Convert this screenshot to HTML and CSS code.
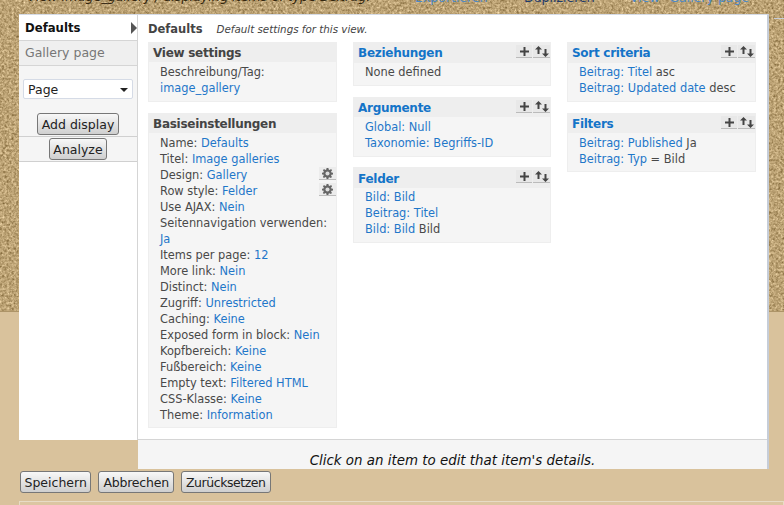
FILE: index.html
```html
<!DOCTYPE html>
<html lang="de">
<head>
<meta charset="utf-8">
<title>Defaults</title>
<link rel="stylesheet" href="styles.css">
</head>
<body>
<svg class="texture" width="784" height="312" aria-hidden="true">
  <filter id="grain" x="0" y="0" width="100%" height="100%" color-interpolation-filters="sRGB">
    <feTurbulence type="fractalNoise" baseFrequency="0.42" numOctaves="4" seed="7"/>
    <feColorMatrix type="matrix" values="0.45 0.3 0 0 0.36  0.45 0.3 0 0 0.26  0.45 0.3 0 0 0.08  0 0 0 0 1"/>
  </filter>
  <rect width="784" height="312" filter="url(#grain)"/>
</svg>
<div class="page">
  <div class="topbar">
    <div class="crumb">View image_gallery / displaying items of type Beitrag:</div>
    <div class="actions"><a class="act-export">Exportieren</a><span class="act-dup">Duplizieren</span><a class="act-view">View "Gallery page"</a></div>
  </div>
  <div class="corner-line"></div>
  <div class="editor">
    <div class="sidebar">
      <div class="tab tab-active">Defaults<span class="arrow"></span></div>
      <div class="tab tab-other">Gallery page</div>
      <div class="add-box">
        <div class="select">Page<span class="caret"></span></div>
        <button class="btn btn-add">Add display</button>
      </div>
      <div class="analyze"><button class="btn btn-analyze">Analyze</button></div>
    </div>
    <div class="main">
      <div class="content">
        <div class="title-row"><strong>Defaults</strong><em>Default settings for this view.</em></div>
        <div class="columns">
          <div class="col col-1">
            <section class="box box-tall">
              <h3>View settings</h3>
              <div class="rows">
                <div>Beschreibung/Tag:</div>
                <div><a>image_gallery</a></div>
              </div>
            </section>
            <section class="box">
              <h3>Basiseinstellungen</h3>
              <div class="rows">
                <div>Name: <a>Defaults</a></div>
                <div>Titel: <a>Image galleries</a></div>
                <div>Design: <a>Gallery</a><span class="icon-btn gear"><svg width="11" height="11" viewBox="0 0 12 12"><path fill="#666" d="M5 0h2l.3 1.7 1.1.5L9.900 1.200 11 2.500 9.900 3.900l.4 1.100L12 5.200v1.800l-1.700.3-.4 1 1 1.500-1.300 1.200-1.400-1-1.100.5L7 12H5l-.3-1.600-1.100-.5-1.400 1L.9 9.700l1-1.500-.4-1L0 7V5.200l1.600-.2.400-1.100-1-1.400L2.200 1.200l1.400 1 1.100-.5z"/><circle cx="6" cy="6" r="2.200" fill="#ddd"/></svg></span></div>
                <div>Row style: <a>Felder</a><span class="icon-btn gear"><svg width="11" height="11" viewBox="0 0 12 12"><path fill="#666" d="M5 0h2l.3 1.700 1.100.5L9.900 1.200 11 2.500 9.900 3.900l.4 1.100L12 5.200v1.800l-1.700.3-.4 1 1 1.500-1.300 1.200-1.400-1-1.100.5L7 12H5l-.3-1.600-1.100-.5-1.400 1L.9 9.700l1-1.500-.4-1L0 7V5.200l1.600-.2.400-1.100-1-1.400L2.200 1.200l1.400 1 1.100-.5z"/><circle cx="6" cy="6" r="2.200" fill="#ddd"/></svg></span></div>
                <div>Use AJAX: <a>Nein</a></div>
                <div>Seitennavigation verwenden:</div>
                <div><a>Ja</a></div>
                <div>Items per page: <a>12</a></div>
                <div>More link: <a>Nein</a></div>
                <div>Distinct: <a>Nein</a></div>
                <div>Zugriff: <a>Unrestricted</a></div>
                <div>Caching: <a>Keine</a></div>
                <div>Exposed form in block: <a>Nein</a></div>
                <div>Kopfbereich: <a>Keine</a></div>
                <div>Fußbereich: <a>Keine</a></div>
                <div>Empty text: <a>Filtered HTML</a></div>
                <div>CSS-Klasse: <a>Keine</a></div>
                <div>Theme: <a>Information</a></div>
              </div>
            </section>
          </div>
          <div class="col col-2">
            <section class="box box-single">
              <h3 class="head-link head-tall">Beziehungen<span class="tools"><span class="icon-btn"><svg width="9" height="9" viewBox="0 0 9 9"><path fill="#444" d="M3.500 0h2v3.500H9v2H5.500V9h-2V5.500H0v-2h3.500z"/></svg></span><span class="icon-btn"><svg width="14" height="11" viewBox="0 0 14 11"><path fill="#444" d="M3.500 0L7 3.500H4.500V8h-2V3.500H0zM10.500 11L7 7.500h2.500V3h2v4.500H14z"/></svg></span></span></h3>
              <div class="rows"><div>None defined</div></div>
            </section>
            <section class="box box-args">
              <h3 class="head-link">Argumente<span class="tools"><span class="icon-btn"><svg width="9" height="9" viewBox="0 0 9 9"><path fill="#444" d="M3.500 0h2v3.500H9v2H5.500V9h-2V5.500H0v-2h3.500z"/></svg></span><span class="icon-btn"><svg width="14" height="11" viewBox="0 0 14 11"><path fill="#444" d="M3.500 0L7 3.500H4.500V8h-2V3.500H0zM10.500 11L7 7.500h2.500V3h2v4.500H14z"/></svg></span></span></h3>
              <div class="rows">
                <div><a>Global: Null</a></div>
                <div><a>Taxonomie: Begriffs-ID</a></div>
              </div>
            </section>
            <section class="box box-fields">
              <h3 class="head-link head-tall">Felder<span class="tools"><span class="icon-btn"><svg width="9" height="9" viewBox="0 0 9 9"><path fill="#444" d="M3.500 0h2v3.500H9v2H5.500V9h-2V5.500H0v-2h3.500z"/></svg></span><span class="icon-btn"><svg width="14" height="11" viewBox="0 0 14 11"><path fill="#444" d="M3.500 0L7 3.500H4.500V8h-2V3.500H0zM10.500 11L7 7.500h2.500V3h2v4.500H14z"/></svg></span></span></h3>
              <div class="rows">
                <div><a>Bild: Bild</a></div>
                <div><a>Beitrag: Titel</a></div>
                <div><a>Bild: Bild</a> Bild</div>
              </div>
            </section>
          </div>
          <div class="col col-3">
            <section class="box box-tall">
              <h3 class="head-link head-tall">Sort criteria<span class="tools"><span class="icon-btn"><svg width="9" height="9" viewBox="0 0 9 9"><path fill="#444" d="M3.500 0h2v3.500H9v2H5.500V9h-2V5.500H0v-2h3.500z"/></svg></span><span class="icon-btn"><svg width="14" height="11" viewBox="0 0 14 11"><path fill="#444" d="M3.500 0L7 3.500H4.500V8h-2V3.500H0zM10.500 11L7 7.500h2.500V3h2v4.500H14z"/></svg></span></span></h3>
              <div class="rows">
                <div><a>Beitrag: Titel</a> asc</div>
                <div><a>Beitrag: Updated date</a> desc</div>
              </div>
            </section>
            <section class="box">
              <h3 class="head-link">Filters<span class="tools"><span class="icon-btn"><svg width="9" height="9" viewBox="0 0 9 9"><path fill="#444" d="M3.500 0h2v3.500H9v2H5.500V9h-2V5.500H0v-2h3.500z"/></svg></span><span class="icon-btn"><svg width="14" height="11" viewBox="0 0 14 11"><path fill="#444" d="M3.500 0L7 3.500H4.500V8h-2V3.500H0zM10.500 11L7 7.500h2.500V3h2v4.500H14z"/></svg></span></span></h3>
              <div class="rows">
                <div><a>Beitrag: Published</a> Ja</div>
                <div><a>Beitrag: Typ</a> = Bild</div>
              </div>
            </section>
          </div>
        </div>
      </div>
      <div class="details"><em>Click on an item to edit that item's details.</em></div>
    </div>
  </div>
  <div class="buttons">
    <button class="btn btn-save">Speichern</button><button class="btn btn-cancel">Abbrechen</button><button class="btn btn-tight">Zurücksetzen</button>
  </div>
  <div class="lower-box"></div>
</div>
</body>
</html>
```

FILE: styles.css
```css
* { box-sizing: border-box; }
html, body { margin: 0; padding: 0; }
body {
  background: #d9c29c;
  font-family: "DejaVu Sans", Verdana, sans-serif;
  font-size: 11.4px;
  line-height: 16px;
  color: #494949;
  width: 784px;
  height: 505px;
  overflow: hidden;
  position: relative;
}
a { color: #1f77c9; }
.texture { position: absolute; left: 0; top: 0; border-bottom: 1px solid #ad9468; }
.page { position: relative; }

.topbar { height: 14px; overflow: hidden; position: relative; }
.crumb { position: absolute; top: -11px; left: 27px; width: 356px; font-size: 13px; font-style: italic; color: #33260f; white-space: nowrap; overflow: hidden; letter-spacing: -0.15px; }
.actions { position: absolute; top: -10px; left: 0; width: 784px; height: 20px; font-size: 12.5px; display: flex; white-space: nowrap; }
.actions a { color: #4a88c8; }
.act-export { margin-left: 415px; width: 109px; }
.act-dup { color: #1d3a6b; width: 106px; }
.corner-line { position: absolute; left: 774px; top: 18px; width: 10px; height: 1px; background: #c6cdd8; }

.editor { display: flex; margin-left: 19px; width: 750px; align-items: flex-start; border-top: 1px solid #d5dbe6; border-right: 2px solid #c6cdd8; }
.sidebar { width: 119px; height: 425px; flex: none; background: #fff; border-right: 1px solid #d5d5d5; }
.tab { padding-left: 6px; }
.tab-active { position: relative; background: #fff; color: #111; font-weight: bold; font-size: 11.7px; border-bottom: 1px solid #d5d5d5; height: 26px; padding-top: 5px; }
.arrow { position: absolute; right: 0; top: 7px; border-left: 6px solid #555; border-top: 6px solid transparent; border-bottom: 6px solid transparent; }
.tab-other { background: #efefef; color: #777; height: 25px; font-size: 12.5px; border-bottom: 1px solid #d5d5d5; padding-top: 4px; }
.add-box { background: #f5f5f5; height: 71px; padding: 13px 4px 0; border-bottom: 1px solid #d0d0d0; display: flex; flex-direction: column; align-items: center; }
.select { width: 110px; height: 20px; background: #fff; border: 1px solid #d5dbe6; border-radius: 2px; font-size: 12.5px; color: #222; padding: 2px 0 0 4px; position: relative; flex: none; }
.caret { position: absolute; right: 4px; top: 8px; border-top: 4px solid #222; border-left: 4px solid transparent; border-right: 4px solid transparent; }
.btn-add { margin-top: 14px; padding: 0 4px; }
.analyze { height: 25px; background: #f5f5f5; border-bottom: 1px solid #d0d0d0; display: flex; justify-content: center; align-items: center; }

.btn {
  font-family: "DejaVu Sans", Verdana, sans-serif;
  font-size: 12.5px;
  line-height: 16px;
  height: 22px;
  padding: 1px 4px 0;
  color: #222;
  background: linear-gradient(#f8f8f8, #cfcfcf);
  border: 1px solid #777;
  border-radius: 3px;
  white-space: nowrap;
  flex: none;
}
.btn-analyze { padding: 1px 3px 0; }
.btn-save { padding: 1px 3.5px 0; }
.btn-cancel { letter-spacing: -0.2px; }
.btn-tight { letter-spacing: -0.45px; }

.main { flex: 1; min-width: 0; height: 454px; display: flex; flex-direction: column; background: #fff; }
.content { height: 424px; padding: 0 10px; }
.title-row { height: 27px; padding-top: 6px; display: flex; gap: 14px; align-items: baseline; }
.title-row strong { font-size: 11.5px; color: #444; }
.title-row em { font-size: 10.3px; color: #444; }
.columns { display: flex; }
.col { display: flex; flex-direction: column; gap: 11px; }
.col-1 { width: 189px; }
.col-2 { width: 198px; margin-left: 16px; }
.col-3 { width: 189px; margin-left: 16px; }
.box { background: #f5f5f5; border: 1px solid #eeeeee; }
.box-tall { height: 60px; }
.box-single { height: 44px; }
.box-args { height: 60px; margin-bottom: -1px; }
.box-fields { height: 76px; }
h3 { margin: 0; position: relative; background: #eeeeee; height: 19px; padding: 2px 4px 0; font-size: 12px; letter-spacing: -0.27px; line-height: 16px; font-weight: bold; color: #444; }
.head-tall { height: 20px; padding-top: 2px; }
.box-fields h3 { padding-top: 3px; }
.head-link { color: #1474c8; }
.rows { padding: 2px 11px 4px; }
.head-tall + .rows { padding-top: 1px; }
.rows > div { height: 16px; white-space: nowrap; position: relative; }
.tools { position: absolute; right: 0; top: 2px; display: flex; gap: 1px; }
.icon-btn { display: flex; align-items: center; justify-content: center; width: 16px; height: 13px; background: #e8e8e8; border-bottom: 1px solid #bbb; }
.icon-btn + .icon-btn { width: 17px; }
.gear { position: absolute; right: -11px; top: 0; width: 17px; height: 13px; background: #ececec; }

.details { height: 30px; background: #f5f5f5; border-top: 1px solid #d5d5d5; text-align: center; padding-top: 13px; font-size: 13.4px; color: #111; }
.buttons { display: flex; gap: 7px; margin: 2px 0 0 20px; }
.lower-box { position: absolute; left: 19px; right: 0; top: 501px; height: 10px; border: 1px solid #e8dcc6; background: #dcc6a2; }
```
